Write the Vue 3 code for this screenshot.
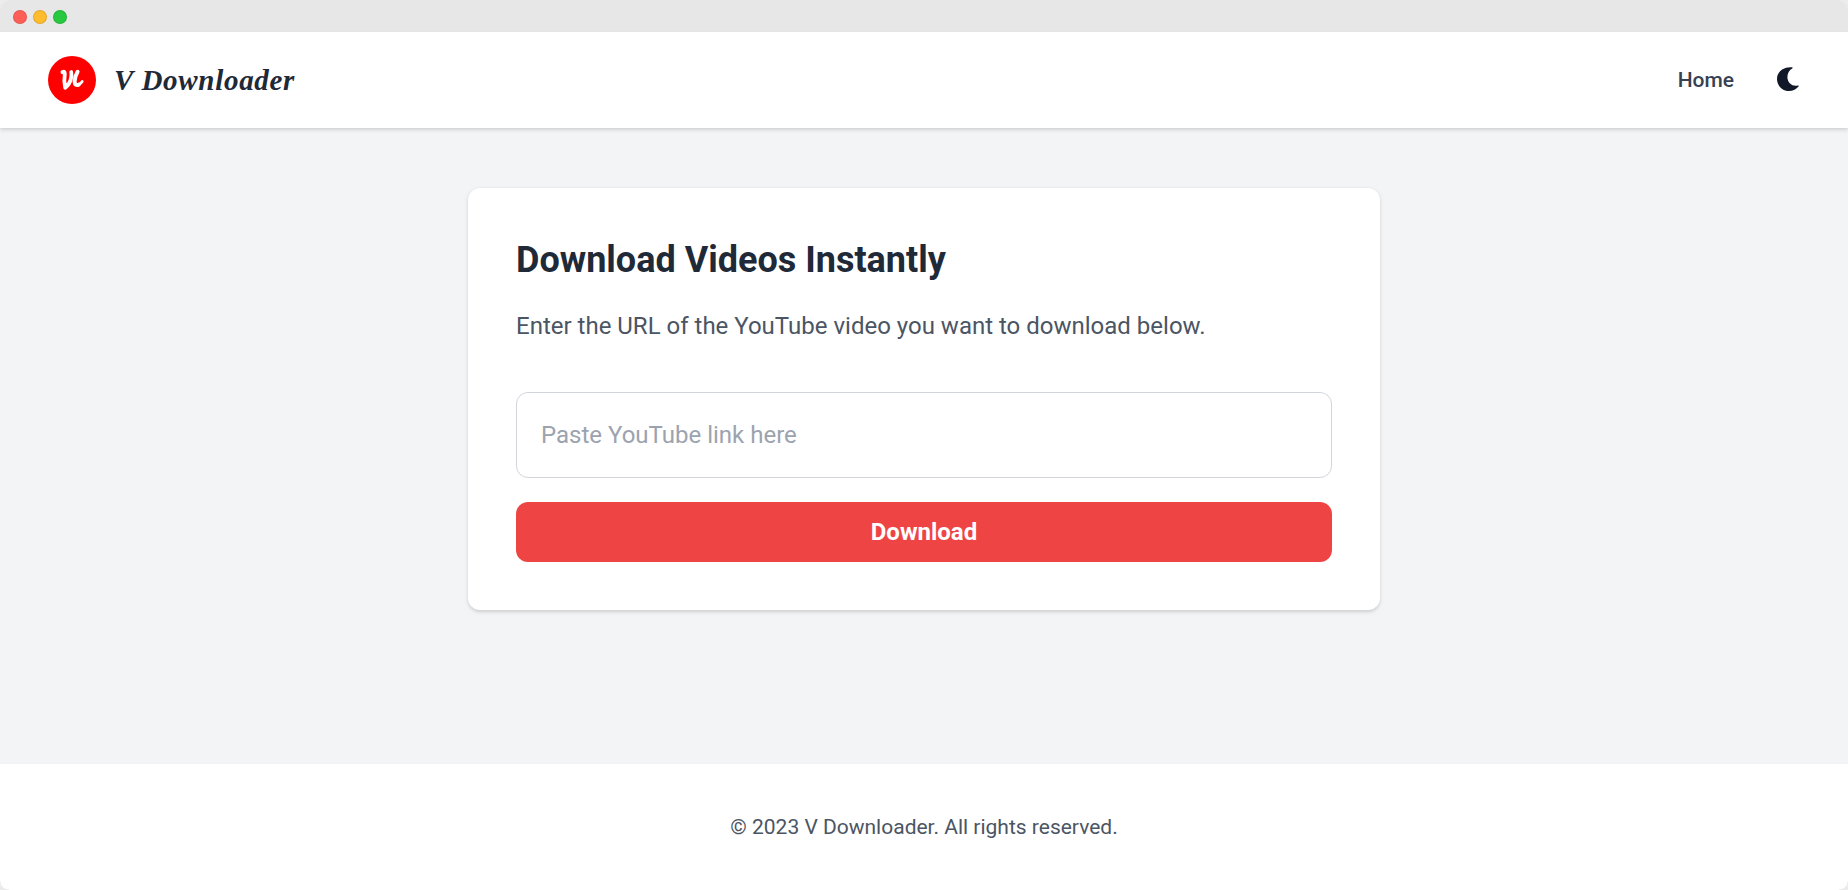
<script setup>
import { ref } from 'vue'

const url = ref('')
</script>

<template>
  <div class="window">
    <div class="titlebar">
      <i class="dot close"></i>
      <i class="dot minimize"></i>
      <i class="dot expand"></i>
    </div>
    <header class="header">
      <div class="brand">
        <svg class="logo" viewBox="0 0 48 48" aria-hidden="true">
          <circle cx="24" cy="24" r="24" fill="#f00" />
          <g fill="none" stroke="#fff" stroke-linecap="round" stroke-linejoin="round">
            <path stroke-width="3.8" d="M14.4 16.2Q16.8 14.6 16.8 18Q15.6 25.500 17.200 31.800Q21.800 28 23 22.500Q23.800 19.500 23.200 16" />
            <path stroke-width="4" d="M29.600 15.800Q26.800 20.500 26.600 25.500Q26.900 30.200 30.800 28.600" />
            <path stroke-width="2.8" d="M30.800 28.600Q33 27.500 34.200 25.500" />
          </g>
        </svg>
        <span class="name">V Downloader</span>
      </div>
      <nav class="nav">
        <a class="link">Home</a>
        <svg class="moon" viewBox="0 0 22 24" aria-hidden="true">
          <path fill="#111827" d="M15.1.3C6.500-.7 0 4.900 0 12.100C0 18.700 5.200 24 11.900 24C16 24 19.400 22.200 21.500 19.500C22 18.900 21.500 18.500 20.900 18.600C14.900 19.700 10.400 15.800 10.400 10C10.400 6.300 12.200 3.100 15.200 1.400C15.900 1 15.800.400 15.100.3Z" />
        </svg>
      </nav>
    </header>
    <main class="main">
      <section class="card">
        <h1>Download Videos Instantly</h1>
        <p>Enter the URL of the YouTube video you want to download below.</p>
        <input v-model="url" type="text" placeholder="Paste YouTube link here" />
        <button type="button">Download</button>
      </section>
    </main>
    <footer class="footer">© 2023 V Downloader. All rights reserved.</footer>
  </div>
</template>

<style>
body {
  margin: 0;
  background: #ececec;
}
</style>

<style scoped>
.window {
  display: flex;
  flex-direction: column;
  box-sizing: border-box;
  height: 890px;
  overflow: hidden;
  border-radius: 10px;
  background: #f3f4f6;
  font-family: Roboto, "Liberation Sans", sans-serif;
}
.titlebar {
  display: flex;
  align-items: center;
  gap: 6px;
  flex: none;
  box-sizing: border-box;
  height: 32px;
  padding: 2px 13px 0;
  background: #e7e7e7;
}
.dot {
  box-sizing: border-box;
  width: 14px;
  height: 14px;
  border: 1px solid rgba(0, 0, 0, 0.1);
  border-radius: 50%;
}
.close { background: #ff5f57; }
.minimize { background: #febc2e; }
.expand { background: #28c840; }
.header {
  display: flex;
  align-items: center;
  justify-content: space-between;
  flex: none;
  height: 96px;
  padding: 0 49px 0 48px;
  background: #fff;
  box-shadow: 0 1.5px 4.5px rgba(0, 0, 0, 0.1), 0 1.5px 3px rgba(0, 0, 0, 0.06);
}
.brand,
.nav {
  display: flex;
  align-items: center;
}
.brand { gap: 18px; }
.logo {
  width: 48px;
  height: 48px;
}
.name {
  color: #1f2937;
  font: italic 700 29px/36px "Liberation Serif", serif;
  letter-spacing: 0.7px;
  white-space: nowrap;
}
.nav { gap: 43px; }
.link {
  color: #374151;
  font-size: 21px;
  font-weight: 500;
  line-height: 30px;
}
.moon {
  width: 22px;
  height: 24px;
  margin-bottom: 2px;
}
.main {
  flex: 1;
  padding-top: 60px;
}
.card {
  box-sizing: border-box;
  width: 912px;
  margin: 0 auto;
  padding: 48px;
  border-radius: 12px;
  background: #fff;
  box-shadow: 0 1.5px 4.5px rgba(0, 0, 0, 0.1), 0 1.5px 3px rgba(0, 0, 0, 0.06);
}
h1 {
  margin: 0 0 24px;
  color: #1f2937;
  font-size: 36px;
  font-weight: 700;
  line-height: 48px;
}
p {
  margin: 0 0 48px;
  color: #4b5563;
  font-size: 24px;
  line-height: 36px;
}
input {
  display: block;
  box-sizing: border-box;
  width: 100%;
  height: 86px;
  margin: 0 0 24px;
  padding: 0 24px;
  border: 1px solid #d1d5db;
  border-radius: 12px;
  outline: none;
  background: #fff;
  color: #1f2937;
  font: 400 24px/36px Roboto, "Liberation Sans", sans-serif;
}
input::placeholder { color: #9ca3af; }
button {
  display: block;
  width: 100%;
  height: 60px;
  padding: 0;
  border: 0;
  border-radius: 12px;
  background: #ef4444;
  color: #fff;
  font: 700 24px/36px Roboto, "Liberation Sans", sans-serif;
}
.footer {
  flex: none;
  padding: 48px;
  background: #fff;
  box-shadow: 0 1.5px 4.5px rgba(0, 0, 0, 0.1), 0 1.5px 3px rgba(0, 0, 0, 0.06);
  color: #4b5563;
  font-size: 21px;
  line-height: 30px;
  text-align: center;
}
</style>
